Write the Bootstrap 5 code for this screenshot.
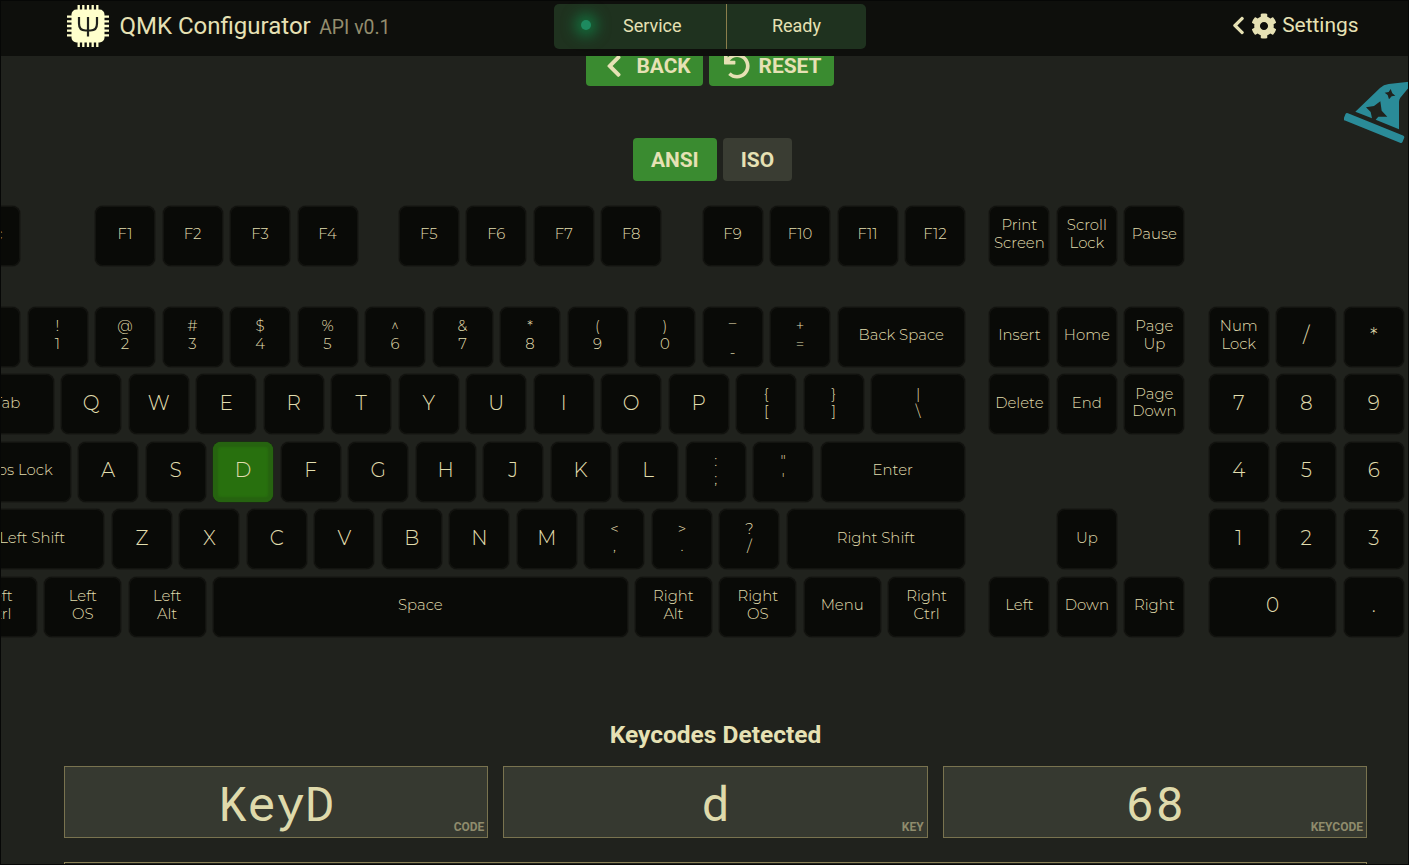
<!DOCTYPE html>
<html lang="en">
<head>
<meta charset="utf-8">
<meta name="viewport" content="width=device-width, initial-scale=1">
<title>QMK Configurator</title>
<link rel="stylesheet" href="https://cdn.jsdelivr.net/npm/bootstrap@5.3.0/dist/css/bootstrap.min.css">
<style>
  :root { --ink: #e6e1b4; --gap: 7.5px; }
  body { background: #20221d; color: var(--ink); font-family: Roboto, "Liberation Sans", sans-serif; height: 865px; overflow: hidden; }
  .page-frame { inset: 0; border: 1px solid #060706; pointer-events: none; z-index: 2000; }
  .topbar { height: 56px; background: #0e0f0c; padding: 0 50.5px 4px 67px; }
  .brand-text { padding-top: 2px; }
  .brand-title { font-size: 24px; line-height: 30px; margin-left: 10.5px; }
  .brand-api { font-size: 19.4px; color: #938d6e; margin-left: 8.5px; }
  .status-strip { width: 312px; height: 45px; left: 554px; top: 4px; background: #1f321f; border-radius: 5px; font-size: 18px; }
  .status-service { width: 173px; border-right: 1px solid #8b7e4c; padding-left: 27px; }
  .status-strip > div { padding-bottom: 2px; }
  .led { width: 10px; height: 10px; background: #1d8a5f; box-shadow: 0 0 14px 6px #14703e; margin: 0 32px 1px 0; }
  .settings-link { font-size: 20.9px; }
  main { padding-top: 43px; }
  .tool-btn { height: 43px; border: 0; border-radius: 4px; font-size: 20.9px; font-weight: 700; color: var(--ink); background: #3a8b30; padding: 2px 12px 0 20px; line-height: 41px; }
  .tool-btn span { padding-top: 2px; }
  .tool-btn.off { background: #3a3d33; }
  .layout-row { margin-top: 52px; padding-left: 16px; }
  .layout-row .tool-btn { padding: 1px 18px 0; }
  .board { margin: 24.6px 0 0 -40px; height: 433px; width: 1460px; }
  .board-row { gap: var(--gap); height: 60px; margin-bottom: var(--gap); }
  .board-row:first-child { margin-bottom: 41.25px; }
  .cap { height: 60px; background: #090a07; border-radius: 8px; box-shadow: inset 0 0 0 1px #131410, 0 0 0 1px #1a1b17; font-family: Montserrat, Inter, sans-serif; font-weight: 300; font-size: 14.9px; line-height: 17.4px; white-space: pre; padding-bottom: 2px; color: #e2deae; }
  .cap.big { font-size: 20px; padding-bottom: 1.4px; }
  .cap.active { background: #28700e; box-shadow: inset 0 0 2px 5px #266310, 0 0 0 1px #1c2a16; }
  .detected-title { font-size: 24.5px; font-weight: 700; line-height: 30px; margin: 81.4px 0 16px; padding-left: 22px; }
  .readouts { gap: 15px; padding: 0 42px 0 64px; }
  .readout { height: 72px; background: #363930; border: 1px solid #79734f; }
  .readout-value { font-family: "Roboto Mono", "DejaVu Sans Mono", monospace; font-size: 48px; line-height: 72px; color: #dfdaab; }
  .readout-name { right: 3px; bottom: 2px; font-size: 12px; line-height: 16px; font-weight: 700; color: #8f8b6c; }
  .log-box { margin: 24px 42px 0 64px; height: 3px; border: 1px solid #8a8156; border-bottom: 0; }
  .hat { top: 80px; right: 0; }
</style>
</head>
<body>
<header class="topbar fixed-top d-flex align-items-center justify-content-between">
  <div class="d-flex align-items-center">
    <svg width="42" height="42" viewBox="0 0 42 42" fill="#ffffcc">
      <rect x="4.500" y="4.500" width="33" height="33" rx="5"/>
      <path d="M11.700 0v42M16.300 0v42M21 0v42M25.700 0v42M30.300 0v42M0 11.700h42M0 16.300h42M0 21h42M0 25.700h42M0 30.300h42" stroke="#ffffcc" stroke-width="2.300"/>
      <path d="M12 12v6.500q0 7 6.500 7h5q6.500 0 6.500-7V12M21 12v19.500" fill="none" stroke="#20221d" stroke-width="2.200"/>
    </svg>
    <div class="brand-text d-flex align-items-baseline"><span class="brand-title">QMK Configurator</span><span class="brand-api">API v0.1</span></div>
  </div>
  <div class="status-strip position-absolute d-flex">
    <div class="status-service d-flex align-items-center"><span class="led rounded-circle"></span>Service</div>
    <div class="flex-fill d-flex align-items-center justify-content-center">Ready</div>
  </div>
  <div class="settings-link d-flex align-items-center">
    <svg width="13" height="21" viewBox="0 0 320 512" fill="#e6e1b4"><path d="M34.52 239.03L228.87 44.69c9.37-9.37 24.57-9.37 33.94 0l22.67 22.67c9.36 9.36 9.37 24.52.04 33.9L131.49 256l154.02 154.75c9.34 9.38 9.32 24.54-.04 33.9l-22.67 22.67c-9.37 9.37-24.57 9.37-33.94 0L34.52 272.97c-9.37-9.37-9.37-24.57 0-33.94z"/></svg>
    <svg width="26" height="26" style="margin:0 5px 0 6.500px" viewBox="0 0 512 512" fill="#e6e1b4"><path d="M487.4 315.7l-42.6-24.6c4.3-23.2 4.3-47 0-70.2l42.6-24.6c4.9-2.8 7.1-8.6 5.5-14-11.1-35.6-30-67.8-54.7-94.6-3.8-4.1-10-5.1-14.8-2.3L380.800 110c-17.9-15.4-38.5-27.3-60.8-35.1V25.800c0-5.6-3.9-10.5-9.4-11.7-36.7-8.2-74.3-7.8-109.2 0-5.5 1.2-9.4 6.1-9.4 11.7V75c-22.2 7.9-42.8 19.8-60.8 35.1L88.700 85.500c-4.9-2.8-11-1.9-14.8 2.3-24.7 26.7-43.6 58.9-54.7 94.6-1.7 5.4.6 11.2 5.5 14L67.300 221c-4.3 23.2-4.3 47 0 70.2l-42.6 24.6c-4.9 2.8-7.1 8.6-5.5 14 11.1 35.6 30 67.8 54.7 94.6 3.8 4.1 10 5.1 14.8 2.3l42.6-24.6c17.9 15.4 38.5 27.3 60.8 35.1v49.2c0 5.6 3.9 10.5 9.4 11.7 36.7 8.2 74.3 7.8 109.2 0 5.5-1.2 9.4-6.1 9.4-11.7v-49.2c22.2-7.9 42.8-19.8 60.8-35.1l42.6 24.6c4.9 2.8 11 1.9 14.8-2.3 24.7-26.7 43.6-58.9 54.7-94.6 1.5-5.5-.7-11.3-5.6-14.1zM256 336c-44.1 0-80-35.9-80-80s35.9-80 80-80 80 35.9 80 80-35.9 80-80 80z"/></svg>
    <span>Settings</span>
  </div>
</header>

<main>
  <div class="d-flex justify-content-center" style="gap:6px;padding-left:11px">
    <button class="tool-btn d-flex align-items-center"><svg width="16" height="26" style="margin-right:14px" viewBox="0 0 320 512" fill="#e6e1b4"><path d="M34.52 239.03L228.87 44.69c9.37-9.37 24.57-9.37 33.94 0l22.67 22.67c9.36 9.36 9.37 24.52.04 33.9L131.49 256l154.02 154.75c9.34 9.38 9.32 24.54-.04 33.9l-22.67 22.67c-9.37 9.37-24.57 9.37-33.94 0L34.52 272.97c-9.37-9.37-9.37-24.57 0-33.94z"/></svg><span>BACK</span></button>
    <button class="tool-btn d-flex align-items-center" style="padding-left:15px"><svg width="26" height="26" style="margin-right:9px" viewBox="0 0 512 512" fill="#e6e1b4"><path d="M212.333 224.333H12c-6.627 0-12-5.373-12-12V12C0 5.373 5.373 0 12 0h48c6.627 0 12 5.373 12 12v78.112C117.773 39.279 184.26 7.47 258.175 8.007c136.906.994 246.448 111.623 246.157 248.532C504.041 393.258 393.12 504 256.333 504c-64.089 0-122.496-24.313-166.51-64.215-5.099-4.622-5.334-12.554-.467-17.42l33.967-33.967c4.474-4.474 11.662-4.717 16.401-.525C170.76 415.336 211.58 432 256.333 432c97.268 0 176-78.716 176-176 0-97.267-78.716-176-176-176-58.496 0-110.28 28.476-142.274 72.333h98.274c6.627 0 12 5.373 12 12v48c0 6.627-5.373 12-12 12z"/></svg><span>RESET</span></button>
  </div>
  <div class="layout-row d-flex justify-content-center" style="gap:6px">
    <button class="tool-btn">ANSI</button>
    <button class="tool-btn off">ISO</button>
  </div>
  <div class="board" id="board"></div>

  <h2 class="detected-title text-center">Keycodes Detected</h2>
  <div class="readouts d-flex">
    <div class="readout position-relative flex-fill text-center w-100"><div class="readout-value">KeyD</div><span class="readout-name position-absolute">CODE</span></div>
    <div class="readout position-relative flex-fill text-center w-100"><div class="readout-value">d</div><span class="readout-name position-absolute">KEY</span></div>
    <div class="readout position-relative flex-fill text-center w-100"><div class="readout-value">68</div><span class="readout-name position-absolute">KEYCODE</span></div>
  </div>
  <div class="log-box"></div>
</main>

<svg class="hat position-absolute" width="65" height="64" viewBox="432 240 195 192" fill="#2a8b98">
  <path fill-rule="evenodd" d="M466 335L540 264Q551 254 566 252L627 245V262L601 293Q597 298 597 306V388L527 359L535 350L562 350L545 332L541 304L522 318L498 322L512 336L516 355ZM572 267L566 276L554 278L563 285L567 298L575 289L586 287L577 280Z"/>
  <rect x="427" y="372" width="190" height="24" rx="6" transform="rotate(22 522 384)"/>
</svg>
<div class="page-frame position-fixed"></div>

<script src="https://cdn.jsdelivr.net/npm/bootstrap@5.3.0/dist/js/bootstrap.bundle.min.js"></script>
<script>
  // Each entry is a legend, or [legend, width in key units]; a bare number is a blank of that many units.
  const rows = [
    ['Esc', 1, 'F1', 'F2', 'F3', 'F4', .5, 'F5', 'F6', 'F7', 'F8', .5, 'F9', 'F10', 'F11', 'F12', .25, 'Print\nScreen', 'Scroll\nLock', 'Pause'],
    ['~\n`', '!\n1', '@\n2', '#\n3', '$\n4', '%\n5', '^\n6', '&\n7', '*\n8', '(\n9', ')\n0', '_\n\n-', '+\n=', ['Back Space', 2], .25, 'Insert', 'Home', 'Page\nUp', .25, 'Num\nLock', '/', '*'],
    [['Tab', 1.5], 'Q', 'W', 'E', 'R', 'T', 'Y', 'U', 'I', 'O', 'P', '{\n[', '}\n]', ['|\n\\', 1.5], .25, 'Delete', 'End', 'Page\nDown', .25, '7', '8', '9'],
    [['Caps Lock', 1.75], 'A', 'S', 'D', 'F', 'G', 'H', 'J', 'K', 'L', ':\n;', '"\n\'', ['Enter', 2.25], 3.5, '4', '5', '6'],
    [['Left Shift', 2.25], 'Z', 'X', 'C', 'V', 'B', 'N', 'M', '<\n,', '>\n.', '?\n/', ['Right Shift', 2.75], 1.25, 'Up', 1.25, '1', '2', '3'],
    [['Left\nCtrl', 1.25], ['Left\nOS', 1.25], ['Left\nAlt', 1.25], ['Space', 6.25], ['Right\nAlt', 1.25], ['Right\nOS', 1.25], ['Menu', 1.25], ['Right\nCtrl', 1.25], .25, 'Left', 'Down', 'Right', .25, ['0', 2], '.']
  ];
  const board = document.getElementById('board');
  for (const row of rows) {
    const line = document.createElement('div');
    line.className = 'board-row d-flex';
    for (const item of row) {
      const cell = document.createElement('div');
      const blank = typeof item === 'number';
      const [legend, units] = blank ? ['', item] : Array.isArray(item) ? item : [item, 1];
      if (!blank) cell.className = 'cap d-flex align-items-center justify-content-center text-center' + (legend.length === 1 ? ' big' : '') + (legend === 'D' ? ' active' : '');
      cell.classList.add('flex-shrink-0');
      cell.style.width = units * 67.5 - 7.5 + 'px';
      cell.textContent = legend;
      line.append(cell);
    }
    board.append(line);
  }
</script>
</body>
</html>
